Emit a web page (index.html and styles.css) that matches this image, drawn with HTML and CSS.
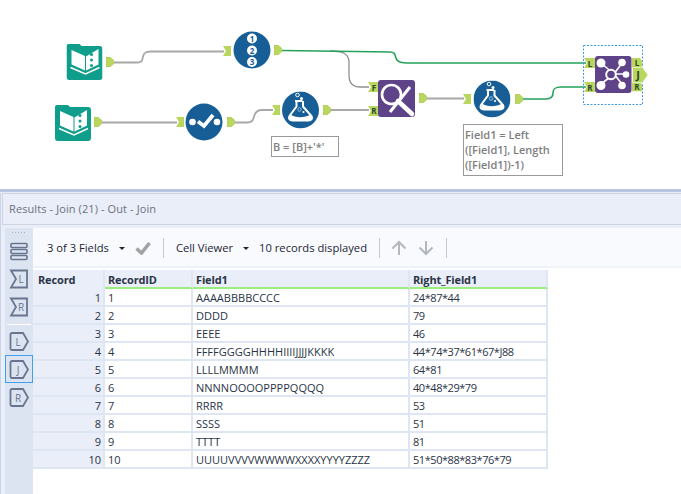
FILE: index.html
```html
<!DOCTYPE html>
<html lang="en">
<head>
<meta charset="utf-8">
<title>Results - Join</title>
<link rel="stylesheet" href="styles.css">
</head>
<body>
<svg class="defs" width="0" height="0" aria-hidden="true">
  <defs>
    <symbol id="book" viewBox="0 0 36 36">
      <path d="M2 0h11l2 2h18a3 3 0 0 1 3 3v28a3 3 0 0 1-3 3H3a3 3 0 0 1-3-3V2a2 2 0 0 1 2-2z" fill="#0f9e8b"/>
      <path d="M5 6l13.500 6v14.500L5 20.500zM19.500 12.500L32 5v15.500l-12.500 6z" fill="#fff"/>
      <circle cx="25" cy="10.500" r="1.500" fill="#0f9e8b"/><circle cx="25" cy="16" r="1.500" fill="#0f9e8b"/><circle cx="25" cy="21.500" r="1.500" fill="#0f9e8b"/>
      <path d="M4 23.500l15 6.500 14-6.500" fill="none" stroke="#fff" stroke-width="1.500"/>
    </symbol>
    <symbol id="flask" viewBox="-18.500 -18.500 37 37">
      <circle r="18.500" fill="#175e96"/>
      <circle cx="-3" cy="-15" r="1.800" fill="none" stroke="#fff"/><circle cx="1" cy="-11.500" r="1.500" fill="#fff"/>
      <path d="M-5.500-9H2M-4-9v5.500L-11 6c-1.200 2.500 0 4.500 3 4.500H8c3 0 4.200-2 3-4.500L2.500-3.500V-9" fill="none" stroke="#fff" stroke-width="2"/>
      <path d="M-10 4.500c5 3.500 14 3.500 20 0l1 2.500c.5 2-.5 3.500-3 3.500H-7.500c-2.500 0-3.500-1.500-3-3.500z" fill="#fff"/>
      <circle cx="-1" cy="-.5" r="1.700" fill="none" stroke="#9cc3e0"/><circle cx="3" cy="2" r="1.100" fill="#fff"/>
    </symbol>
    <symbol id="out" viewBox="0 0 8 10"><path d="M0 0h4l4 3.500v3L4 10H0z" fill="#b9d65f" stroke="#a5c24e" stroke-width=".5"/></symbol>
    <symbol id="in" viewBox="0 0 8 10"><path d="M0 0h8v10H0l3-5z" fill="#b9d65f"/></symbol>
    <symbol id="tag" viewBox="0 0 11 10"><path d="M0 0h11v10H0l3-5z" fill="#b9d65f"/></symbol>
    <symbol id="tagout" viewBox="0 0 10 10"><path d="M0 0h8l2 3v7H0z" fill="#b9d65f"/></symbol>
  </defs>
</svg>

<div class="canvas">
  <svg class="diagram" width="681" height="189" viewBox="0 0 681 189" role="img" aria-label="Workflow">
    <g class="wire">
      <path d="M113 62.500h22c8 0 7-2 8-6 1-4 3-5 9-5h72"/>
      <path d="M102 122.500h75"/>
      <path d="M234 122.500h13c5 0 6-2 7-6 1-4 3-6.500 8-6.500h11"/>
      <path d="M330 110h39"/>
      <path d="M426 98.500h38"/>
      <path class="thin" d="M330 51c12 0 18 2 19 10v14c0 8 4 12 11 12h9"/>
    </g>
    <g class="wire green">
      <path d="M282 50.500l108 1.500c5 0 5 3 6 6 1 4 5 5 14 5h176"/>
      <path d="M522 99h24c5 0 7-2 7-6 0-5 3-6 8-6h25"/>
    </g>

    <use href="#book" x="66.500" y="44" width="36" height="36"/>
    <use href="#book" x="55" y="105" width="36" height="36"/>
    <use href="#out" x="106" y="57" width="8" height="10"/>
    <use href="#out" x="94" y="117" width="8" height="10"/>

    <use href="#in" x="223" y="46" width="8" height="10"/>
    <circle cx="252" cy="50" r="18.500" fill="#175e96"/>
    <g class="num">
      <circle cx="252" cy="38.500" r="5"/><circle cx="252" cy="50.500" r="5"/><circle cx="252" cy="62" r="5"/>
      <text x="252" y="41.500">1</text><text x="252" y="53.500">2</text><text x="252" y="65">3</text>
    </g>
    <use href="#out" x="274" y="45" width="8" height="10"/>

    <use href="#in" x="176" y="117" width="8" height="10"/>
    <circle cx="204" cy="122" r="18.500" fill="#175e96"/>
    <circle cx="192.500" cy="122" r="3.300" fill="#fff"/><circle cx="217" cy="122" r="3.300" fill="#fff"/>
    <path d="M198 121.500l6 4.500 9-11" fill="none" stroke="#fff" stroke-width="3.800"/>
    <use href="#out" x="227" y="117" width="8" height="10"/>

    <use href="#in" x="272" y="105" width="8" height="10"/>
    <use href="#flask" x="282" y="91.500" width="37" height="37"/>
    <use href="#out" x="323" y="105" width="8" height="10"/>

    <use href="#tag" x="368" y="82" width="11" height="10"/>
    <use href="#tag" x="368" y="106" width="11" height="10"/>
    <text class="pin" x="374" y="90.500">F</text><text class="pin" x="374" y="114">R</text>
    <rect x="378" y="80" width="37" height="37" rx="3" fill="#5f4388"/>
    <circle cx="391.500" cy="94.500" r="9.500" fill="none" stroke="#fff" stroke-width="2.600"/>
    <path d="M398 101l14 13" stroke="#fff" stroke-width="4.600" stroke-linecap="round"/>
    <path d="M410 87l-20 25" stroke="#fff" stroke-width="3"/>
    <use href="#out" x="419" y="93" width="8" height="10"/>

    <use href="#in" x="463" y="94" width="8" height="10"/>
    <use href="#flask" x="473.500" y="80.500" width="37" height="37"/>
    <use href="#out" x="515" y="94" width="8" height="10"/>

    <rect class="select" x="583.500" y="45.500" width="59" height="59"/>
    <use href="#tag" x="584" y="58" width="11" height="10"/>
    <use href="#tag" x="584" y="82" width="11" height="10"/>
    <text class="pin" x="590" y="66.500">L</text><text class="pin" x="590" y="90.500">R</text>
    <rect x="595" y="56" width="36.500" height="37" rx="3" fill="#5f4388"/>
    <g class="joinlines">
      <path d="M601 63l13 11M622 63l-8 11M626 74h-12M601 84l13-10M622 84l-8-10"/>
      <circle class="ring" cx="611" cy="74.500" r="4.800"/>
    </g>
    <g fill="#fff">
      <circle cx="601" cy="63" r="4.500"/><circle cx="622" cy="62.500" r="3.800"/><circle cx="626" cy="74.500" r="3.300"/><circle cx="601" cy="85.500" r="4.500"/><circle cx="622" cy="85.500" r="3.800"/>
    </g>
    <use href="#tagout" x="632" y="58" width="10" height="10"/>
    <use href="#tagout" x="632" y="81.500" width="10" height="10"/>
    <path d="M632.500 67.500h10l5.500 7.500-5.500 7.500h-10z" fill="#b9d65f" stroke="#fff" stroke-width=".6"/>
    <text class="pin" x="637" y="66">L</text><text class="pin" x="637" y="90">R</text>
    <text class="pin big" x="638" y="79">J</text>
  </svg>
  <div class="note note-b">B = [B]+'*'</div>
  <div class="note note-field">Field1 = Left<br>([Field1], Length<br>([Field1])-1)</div>
</div>

<div class="band"></div>

<div class="results">
  <header class="results-title">Results - Join (21) - Out - Join</header>
  <div class="results-body">
    <aside class="rail">
      <div class="grip"></div>
      <button class="rail-btn" aria-label="Data">
        <svg width="18" height="19" viewBox="0 0 18 19"><g fill="none" stroke="#67758f" stroke-width="1.600"><rect x="1" y="1.500" width="16" height="4" rx="1"/><rect x="1" y="7.500" width="16" height="4" rx="1"/><rect x="1" y="13.500" width="16" height="4" rx="1"/></g></svg>
      </button>
      <button class="rail-btn">
        <svg width="20" height="20" viewBox="0 0 20 20"><path d="M2 1.500h16v17H2L7 10z" fill="none" stroke="#67758f" stroke-width="1.800"/><text x="12" y="14" class="rail-letter">L</text></svg>
      </button>
      <button class="rail-btn">
        <svg width="20" height="20" viewBox="0 0 20 20"><path d="M2 1.500h16v17H2L7 10z" fill="none" stroke="#67758f" stroke-width="1.800"/><text x="12" y="14" class="rail-letter">R</text></svg>
      </button>
      <hr class="rail-sep">
      <button class="rail-btn">
        <svg width="20" height="19" viewBox="0 0 20 19"><path d="M3 1h11l5 8.500-5 8.500H3a1.500 1.500 0 0 1-1.500-1.500v-14A1.500 1.500 0 0 1 3 1z" fill="none" stroke="#67758f" stroke-width="1.800"/><text x="9" y="13.500" class="rail-letter">L</text></svg>
      </button>
      <button class="rail-btn active">
        <svg width="20" height="19" viewBox="0 0 20 19"><path d="M3 1h11l5 8.500-5 8.500H3a1.500 1.500 0 0 1-1.500-1.500v-14A1.500 1.500 0 0 1 3 1z" fill="none" stroke="#67758f" stroke-width="1.800"/><text x="9" y="13.500" class="rail-letter">J</text></svg>
      </button>
      <button class="rail-btn">
        <svg width="20" height="19" viewBox="0 0 20 19"><path d="M3 1h11l5 8.500-5 8.500H3a1.500 1.500 0 0 1-1.500-1.500v-14A1.500 1.500 0 0 1 3 1z" fill="none" stroke="#67758f" stroke-width="1.800"/><text x="9" y="13.500" class="rail-letter">R</text></svg>
      </button>
    </aside>
    <main class="data">
      <div class="toolbar">
        <span>3 of 3 Fields</span>
        <span class="caret"></span>
        <svg class="tick" width="16" height="14" viewBox="0 0 16 14"><path d="M1.500 7.500l5 4.500 8-10" fill="none" stroke="#a3a3a3" stroke-width="3.600"/></svg>
        <span class="tool-sep"></span>
        <span>Cell Viewer</span>
        <span class="caret"></span>
        <span>10 records displayed</span>
        <span class="tool-sep after-text"></span>
        <svg class="arrow" width="16" height="16" viewBox="0 0 16 16"><path d="M8 15V2M1.500 8.500L8 2l6.500 6.500" fill="none" stroke="#b4b8bd" stroke-width="2"/></svg>
        <svg class="arrow" width="16" height="16" viewBox="0 0 16 16"><path d="M8 1v13M1.500 7.500L8 14l6.500-6.500" fill="none" stroke="#b4b8bd" stroke-width="2"/></svg>
        <span class="tool-sep"></span>
      </div>
      <table class="grid">
        <colgroup><col class="c-rec"><col class="c-id"><col class="c-f"><col class="c-r"></colgroup>
        <thead>
          <tr><th class="plain">Record</th><th>RecordID</th><th>Field1</th><th>Right_Field1</th></tr>
        </thead>
        <tbody>
          <tr><td class="num-cell">1</td><td>1</td><td>AAAABBBBCCCC</td><td class="digits">24*87*44</td></tr>
          <tr><td class="num-cell">2</td><td>2</td><td>DDDD</td><td class="digits">79</td></tr>
          <tr><td class="num-cell">3</td><td>3</td><td>EEEE</td><td class="digits">46</td></tr>
          <tr><td class="num-cell">4</td><td>4</td><td>FFFFGGGGHHHHIIIIJJJJKKKK</td><td class="digits">44*74*37*61*67*J88</td></tr>
          <tr><td class="num-cell">5</td><td>5</td><td>LLLLMMMM</td><td class="digits">64*81</td></tr>
          <tr><td class="num-cell">6</td><td>6</td><td>NNNNOOOOPPPPQQQQ</td><td class="digits">40*48*29*79</td></tr>
          <tr><td class="num-cell">7</td><td>7</td><td>RRRR</td><td class="digits">53</td></tr>
          <tr><td class="num-cell">8</td><td>8</td><td>SSSS</td><td class="digits">51</td></tr>
          <tr><td class="num-cell">9</td><td>9</td><td>TTTT</td><td class="digits">81</td></tr>
          <tr><td class="num-cell">10</td><td>10</td><td>UUUUVVVVWWWWXXXXYYYYZZZZ</td><td class="digits">51*50*88*83*76*79</td></tr>
        </tbody>
      </table>
    </main>
  </div>
</div>
</body>
</html>
```
FILE: styles.css
```css
* { box-sizing: border-box; }
html, body { margin: 0; height: 100%; }
body {
  width: 681px; height: 494px; overflow: hidden;
  display: flex; flex-direction: column;
  background: #fff;
  font-family: "Open Sans", "Noto Sans", sans-serif;
  font-size: 11px; color: #1f2a3a;
}
.defs { position: absolute; }

.canvas { position: relative; height: 189px; flex: none; background: #fff; }
.diagram { display: block; }
.wire path { fill: none; stroke: #a8a8a8; stroke-width: 1.800; }
.wire path.thin { stroke: #8f8f8f; stroke-width: 1.300; }
.wire.green path { stroke: #25a25a; stroke-width: 1.600; }
.num circle { fill: #fff; }
.num text { fill: #175e96; font: bold 8px "Open Sans", sans-serif; text-anchor: middle; }
.pin { fill: #2f4a2a; font: bold 8px "Open Sans", sans-serif; text-anchor: middle; }
.pin.big { font-size: 11px; }
.select { fill: none; stroke: #3a9be8; stroke-width: 1; stroke-dasharray: 2 1.500; }
.joinlines path { stroke: #fff; stroke-width: 1.600; fill: none; }
.joinlines .ring { fill: #5f4388; stroke: #fff; stroke-width: 2; }

.note {
  position: absolute;
  background: #fff; border: 1.500px solid #9a9a9a; color: #7e7e7e;
  font-weight: 600; line-height: 15px; padding: 2px 1px;
}
.note-b { left: 271px; top: 136px; width: 68px; height: 21px; }
.note-field { left: 463px; top: 124px; width: 100px; height: 52px; padding-top: 2px; }

.band { height: 4px; flex: none; border-top: 1px solid #b8c4de; background: linear-gradient(#b8c4de 0 2px, #e6ebf6 2px); }

.results { flex: 1; min-height: 0; display: flex; flex-direction: column; background: #e9eef8; padding-left: 2px; border-left: 1px solid #c9d4ea; }
.results-title {
  height: 32px; flex: none; padding: 0 6px 2px; display: flex; align-items: center;
  background: #e9eef8; border: 1px solid #cfd5e0; border-right: 0;
  color: #6d7080; font-size: 11px; margin-bottom: 3px; margin-left: -1px; letter-spacing: .1px;
}
.results-body { flex: 1; min-height: 0; display: flex; }

.rail { width: 28px; margin-left: 2px; flex: none; background: #dce4f1; display: flex; flex-direction: column; align-items: center; }
.grip { width: 16px; height: 6px; margin-top: 3px; flex: none; background: radial-gradient(circle, #a9b2c2 .7px, transparent 1px) 0 0 / 3px 3px repeat-x; }
.rail-btn {
  width: 28px; height: 28px; flex: none; padding: 0; border: 1px solid transparent; background: none;
  display: flex; align-items: center; justify-content: center;
}
.rail-btn.active { border-color: #3ea0ee; }
.rail-letter { fill: #67758f; font: 10px "Open Sans", sans-serif; text-anchor: middle; }
.rail-sep { width: 24px; height: 1px; border: 0; background: #fff; margin: 3px 0 2px; flex: none; }

.data { flex: 1; min-width: 0; background: #fff; }
.toolbar {
  height: 40px; display: flex; align-items: center; padding: 1px 0 0 14px;
  background: #f8fafe; border-bottom: 2px solid #eef2f9; color: #1d2533; font-size: 11.200px;
}
.toolbar > * { flex: none; }
.caret { width: 0; height: 0; margin: 1px 10px 0 10px; border: 3px solid transparent; border-top: 3px solid #1d2533; border-bottom: 0; }
.tick { margin-right: 12px; }
.tool-sep { width: 1px; height: 20px; background: #c6c8cc; margin-right: 12px; }
.tool-sep.after-text { margin-left: 12px; margin-right: 11px; }
.arrow { margin-right: 11px; }
.arrow + .arrow { margin-right: 12px; }

.grid {
  border-collapse: separate; border-spacing: 0; table-layout: fixed; width: 515px;
  margin-top: 2px; background: #fff; line-height: 15px;
}
.c-rec { width: 72px; } .c-id { width: 88px; } .c-f { width: 217px; } .c-r { width: 138px; }
.grid th, .grid td { padding: 1px 0 0 3px; height: 18px; border-right: 2px solid #dfe6f3; border-bottom: 2px solid #dfe6f3; white-space: nowrap; overflow: hidden; font-weight: 400; color: #2a3446; }
.grid th { text-align: left; font-weight: 700; background: #e9eef8; height: 19px; border-bottom: 2px solid #9bee7c; letter-spacing: -.15px; }
.grid th.plain { border-bottom-color: #e9eef8; padding-left: 5px; }
.grid td.num-cell { text-align: right; background: #e9eef8; padding: 1px 2px 0 0; }
.grid td.digits { letter-spacing: -.45px; }
```
